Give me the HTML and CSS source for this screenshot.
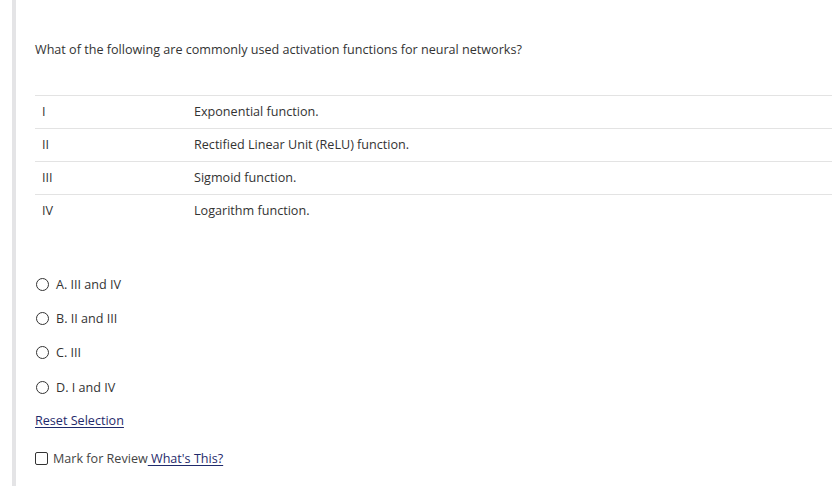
FILE: index.html
```html
<!DOCTYPE html>
<html>
<head>
<meta charset="utf-8">
<link rel="stylesheet" href="styles.css">
</head>
<body>
<div class="page">
  <div class="content">
    <p class="question">What of the following are commonly used activation functions for neural networks?</p>
    <table class="stmts">
      <tr><td class="num">I</td><td>Exponential function.</td></tr>
      <tr><td class="num">II</td><td>Rectified Linear Unit (ReLU) function.</td></tr>
      <tr><td class="num">III</td><td>Sigmoid function.</td></tr>
      <tr><td class="num">IV</td><td>Logarithm function.</td></tr>
    </table>
    <div class="options">
      <label class="opt"><span class="radio"></span><span>A. III and IV</span></label>
      <label class="opt"><span class="radio"></span><span>B. II and III</span></label>
      <label class="opt"><span class="radio"></span><span>C. III</span></label>
      <label class="opt"><span class="radio"></span><span>D. I and IV</span></label>
    </div>
    <div class="reset"><a href="#" class="link">Reset Selection</a></div>
    <div class="review"><span class="check"></span><span>Mark for Review</span><a href="#" class="link">&nbsp;What's This?</a></div>
  </div>
</div>
</body>
</html>
```

FILE: styles.css
```css
html, body {
  margin: 0;
  padding: 0;
  background: #fff;
  height: 100%;
}
body {
  font-family: "Open Sans", "Liberation Sans", sans-serif;
  font-size: 12.6px;
  color: #333;
}
.page {
  margin-left: 12px;
  border-left: 4px solid #e4e4e6;
  min-height: 486px;
  box-sizing: border-box;
}
.content {
  padding-left: 19px;
  padding-top: 41px;
}
.question {
  margin: 0;
  line-height: 17px;
  height: 17px;
}
.stmts {
  margin-top: 37px;
  width: calc(100% + 1px);
  border-collapse: collapse;
}
.stmts td {
  height: 31px;
  padding: 0 0 1px 7px;
  border-top: 1px solid #e3e3e3;
  vertical-align: middle;
  line-height: 17px;
}
.stmts td.num {
  width: 145px;
}
.options {
  margin-top: 40px;
  display: flex;
  flex-direction: column;
}
.opt {
  display: flex;
  align-items: center;
  height: 34.3px;
  gap: 7px;
}
.radio {
  width: 11px;
  height: 11px;
  border: 1.5px solid #333;
  border-radius: 50%;
  margin-left: 1px;
  flex: none;
}
.reset {
  height: 32px;
  display: flex;
  align-items: center;
}
.link {
  color: #1f2a6b;
  text-decoration: underline;
  text-underline-offset: 2px;
}
.review {
  margin-top: 5px;
  height: 34px;
  display: flex;
  align-items: center;
  color: #444;
}
.check {
  width: 11px;
  height: 11px;
  border: 1.5px solid #333;
  border-radius: 2px;
  margin-right: 5px;
  flex: none;
}
```
